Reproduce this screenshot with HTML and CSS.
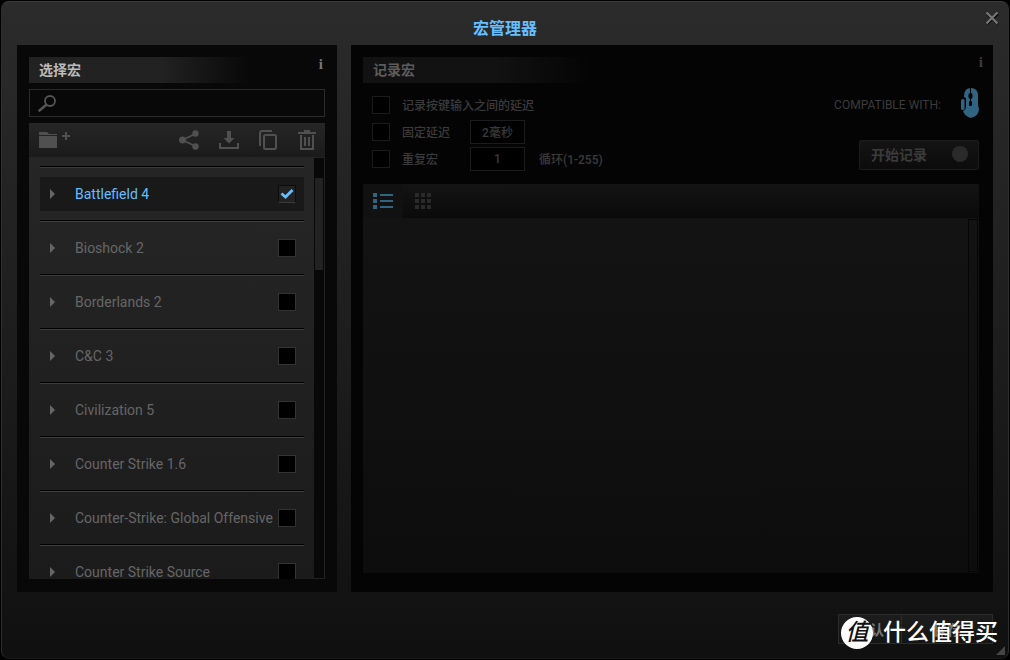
FILE: index.html
```html
<!DOCTYPE html>
<html lang="zh-CN">
<head>
<meta charset="utf-8">
<title>宏管理器</title>
<link rel="stylesheet" href="styles.css">
</head>
<body>
<main class="dialog">
  <header class="dialog-head">
    <h1>宏管理器</h1>
    <button class="close" aria-label="关闭"><svg width="14" height="14" viewBox="0 0 14 14"><path d="M2 3l11 10M13 3L2 13" stroke="#000" stroke-width="2"/><path d="M1.500 1.500l11 11M12.500 1.500l-11 11" stroke="#777" stroke-width="2.200"/></svg></button>
  </header>
  <div class="panels">
    <section class="panel select-panel">
      <div class="panel-head"><h2>选择宏</h2><button class="info" aria-label="信息">i</button></div>
      <label class="search">
        <svg width="20" height="18" viewBox="0 0 20 18" fill="none" stroke="#555"><circle cx="13" cy="7" r="5" stroke-width="1.800"/><path d="M9 11L2.500 16.500" stroke-width="2.600" stroke-linecap="round"/></svg>
        <input type="text" aria-label="搜索">
      </label>
      <div class="toolbar">
        <button class="new-folder" aria-label="新建文件夹"><svg width="32" height="20" viewBox="0 0 32 20" fill="#505050"><path d="M0 2h8l2 2h8v1H0zM0 6h18v12H0z"/><path d="M26 2h2v3h3v2h-3v3h-2V7h-3V5h3z"/></svg></button>
        <button aria-label="分享"><svg width="20" height="20" viewBox="0 0 20 20" fill="#505050"><path d="M17 3.500L3.500 10 17 16.500" fill="none" stroke="#505050" stroke-width="1.800"/><circle cx="16.500" cy="3.500" r="3.200"/><circle cx="3.500" cy="10" r="3.500"/><circle cx="16.500" cy="16.500" r="3.200"/></svg></button>
        <button aria-label="导入"><svg width="20" height="20" viewBox="0 0 20 20" fill="#505050"><path d="M8 1h4v7h3.500L10 13.500 4.500 8H8zM0 13h2v4h16v-4h2v6H0z"/></svg></button>
        <button aria-label="复制"><svg width="20" height="20" viewBox="0 0 20 20" fill="none" stroke="#505050" stroke-width="2"><path d="M1 16V3q0-2 2-2H13"/><rect x="5" y="5" width="12" height="14" rx="1.500"/></svg></button>
        <button aria-label="删除"><svg width="20" height="20" viewBox="0 0 20 20"><path d="M1 2h6V0h6v2h6v2H1z" fill="#505050"/><path d="M4 5v14h12V5M8 7v9M12 7v9" fill="none" stroke="#505050" stroke-width="2"/></svg></button>
      </div>
      <div class="list-wrap">
        <ul class="list">
          <li><div class="row selected"><button class="arrow" aria-label="展开"></button><label for="g1">Battlefield 4</label><input id="g1" class="check" type="checkbox" checked></div></li>
          <li><div class="row"><button class="arrow" aria-label="展开"></button><label for="g2">Bioshock 2</label><input id="g2" class="check" type="checkbox"></div></li>
          <li><div class="row"><button class="arrow" aria-label="展开"></button><label for="g3">Borderlands 2</label><input id="g3" class="check" type="checkbox"></div></li>
          <li><div class="row"><button class="arrow" aria-label="展开"></button><label for="g4">C&amp;C 3</label><input id="g4" class="check" type="checkbox"></div></li>
          <li><div class="row"><button class="arrow" aria-label="展开"></button><label for="g5">Civilization 5</label><input id="g5" class="check" type="checkbox"></div></li>
          <li><div class="row"><button class="arrow" aria-label="展开"></button><label for="g6">Counter Strike 1.6</label><input id="g6" class="check" type="checkbox"></div></li>
          <li><div class="row"><button class="arrow" aria-label="展开"></button><label for="g7">Counter-Strike: Global Offensive</label><input id="g7" class="check" type="checkbox"></div></li>
          <li><div class="row"><button class="arrow" aria-label="展开"></button><label for="g8">Counter Strike Source</label><input id="g8" class="check" type="checkbox"></div></li>
        </ul>
        <div class="scrollbar"><div class="thumb"></div></div>
      </div>
    </section>
    <section class="panel record-panel">
      <div class="panel-head"><h2>记录宏</h2><button class="info" aria-label="信息">i</button></div>
      <div class="record-settings">
        <div class="options">
          <div class="option"><input id="o1" class="check" type="checkbox"><label for="o1">记录按键输入之间的延迟</label></div>
          <div class="option"><input id="o2" class="check" type="checkbox"><label for="o2" class="short">固定延迟</label><input class="value" type="text" value="2毫秒" aria-label="延迟"></div>
          <div class="option"><input id="o3" class="check" type="checkbox"><label for="o3" class="short">重复宏</label><input id="loops" class="value" type="text" value="1"><label for="loops" class="unit">循环(1-255)</label></div>
        </div>
        <div class="record-side">
          <div class="compatible"><span>COMPATIBLE WITH:</span>
            <svg width="18" height="30" viewBox="0 0 18 30"><path d="M6 1q4-2 8 0 3 2 3 5v9q0 3 1 6 0 7-8.500 9-6-2-7.500-7 3-1 3-5V10L3 9q0-6 3-8z" fill="#316382"/><rect x="0" y="11" width="3.500" height="11" rx="1.500" fill="#316382"/><path d="M9.500 0v5M9.500 10v4" stroke="#050505"/><rect x="7.500" y="5" width="4" height="6" rx="2" fill="#050505"/><rect x="8" y="13" width="3" height="5" rx="1" fill="#050505"/></svg>
          </div>
          <button class="start">开始记录<span class="dot"></span></button>
        </div>
      </div>
      <div class="editor">
        <div class="tabs">
          <button class="tab active" aria-label="列表"><svg width="20" height="16" viewBox="0 0 20 16" fill="#316382"><path d="M0 0h4v4H0zM0 6h4v4H0zM0 12h4v4H0zM7 1h13v2H7zM7 7h13v2H7zM7 13h13v2H7z"/></svg></button>
          <button class="tab" aria-label="网格"><svg width="16" height="16" viewBox="0 0 16 16" fill="#2a2a2a"><path d="M0 0h4v4H0zM6 0h4v4H6zM12 0h4v4h-4zM0 6h4v4H0zM6 6h4v4H6zM12 6h4v4h-4zM0 12h4v4H0zM6 12h4v4H6zM12 12h4v4h-4z"/></svg></button>
        </div>
        <div class="canvas"><div class="rail"></div></div>
      </div>
    </section>
  </div>
  <footer><button class="foot ok">默认</button><button class="foot save">保存</button></footer>
  <div class="watermark"><span class="badge">值</span><span>什么值得买</span></div>
  <svg class="grip" width="9" height="9" viewBox="0 0 9 9"><path d="M9 0v9H0z" fill="#444"/></svg>
</main>
</body>
</html>
```
FILE: styles.css
```css
* { box-sizing: border-box; }
body {
  margin: 0;
  padding: 1px;
  height: 100vh;
  background: #000;
  font-family: Roboto, "Noto Sans CJK SC", sans-serif;
  font-size: 14px;
  color: #666;
}
button, input { font: inherit; color: inherit; padding: 0; margin: 0; border: 0; background: none; }
button svg { display: block; }
h1, h2, ul { margin: 0; padding: 0; list-style: none; }

.dialog {
  position: relative;
  height: 100%;
  display: flex;
  flex-direction: column;
  padding: 0 15px;
  border: 1px solid #2e2e2e;
  border-top-color: #3a3a3a;
  border-bottom-color: #1a1a1a;
  border-radius: 8px;
  background: linear-gradient(#2b2b2b, #101010);
}
.dialog-head { height: 43px; flex: none; display: flex; justify-content: center; padding-top: 15px; }
h1 { font-size: 16px; line-height: 24px; color: #64beff; font-weight: 700; }
.close { position: absolute; top: 9px; right: 9px; }

.panels { flex: 1; min-height: 0; display: flex; gap: 14px; }
.panel { display: flex; flex-direction: column; background: #080808; }
.select-panel { width: 320px; flex: none; padding: 12px 12px 13px; }
.record-panel { flex: 1; padding: 12px 14px 19px 12px; background: #040404; }
.panel-head { display: flex; height: 26px; flex: none; justify-content: space-between; align-items: flex-start; }
h2 {
  width: 240px;
  padding-left: 10px;
  font-size: 14px;
  line-height: 26px;
  color: #bbb;
  background: linear-gradient(90deg, #222 55%, transparent 92%);
}
.record-panel h2 { color: #5c5c5c; background: linear-gradient(90deg, #121212 55%, transparent 95%); }
.info { margin-right: 2px; font: bold 15px/14px "Liberation Serif", serif; color: #777; }
.record-panel .info { color: #3c3c3c; line-height: 10px; margin-right: -4px; }

.search {
  display: flex;
  align-items: center;
  height: 28px;
  margin: 6px 0;
  padding: 0 7px;
  border: 1px solid #2b2b2b;
}
.search input { flex: 1; min-width: 0; outline: 0; }
.toolbar {
  display: flex;
  align-items: center;
  gap: 19px;
  height: 34px;
  padding: 0 9px 0 10px;
  background: linear-gradient(#262626, #1b1b1b);
}
.toolbar { gap: 20px; padding-right: 8px; }
.toolbar button:last-child { margin-left: -2px; }
.new-folder { margin-right: auto; }

.list-wrap { flex: 1; min-height: 0; display: flex; background: linear-gradient(#262626, #1b1b1b); }
.list { flex: 1; overflow: hidden; padding: 9px 10px 0 11px; }
.list li { border-top: 1px solid #000; padding-bottom: 9px; }
.list li::before { content: ""; display: block; height: 1px; margin-bottom: 9px; background: #3c3c3c; }
.row { display: flex; align-items: center; height: 34px; padding: 0 8px 0 10px; }
.row label { flex: 1; white-space: nowrap; }
.selected { background: #191919; color: #64beff; }
.arrow {
  width: 5px;
  height: 10px;
  margin-right: 20px;
  background: #666;
  clip-path: polygon(0 0, 100% 50%, 0 100%);
}
.check {
  appearance: none;
  flex: none;
  width: 18px;
  height: 18px;
  background: #000;
  border: 1px solid #333;
}
.check:checked {
  border-color: #0c0c0c #0c0c0c #3a3a3a;
  background: #222 url("data:image/svg+xml,%3Csvg xmlns='http://www.w3.org/2000/svg' viewBox='0 0 16 16'%3E%3Cpath d='M2.500 7.500l4 3.500 7-7' fill='none' stroke='%2364beff' stroke-width='2.800'/%3E%3C/svg%3E");
}
.scrollbar { width: 11px; padding: 20px 1px 1px 1px; background: #080808; border: solid #222; border-width: 1px 1px 1px 0; }
.thumb { height: 92px; background: #222; }

.record-settings { display: flex; justify-content: space-between; height: 101px; flex: none; font-size: 12px; color: #3b3b3b; }
.options { padding: 8px 0 0 9px; font-weight: 500; }
.option { display: flex; align-items: center; height: 27px; }
.record-panel .check { border-color: #1b1b1b; margin-right: 12px; }
.short { width: 68px; }
.value { width: 55px; height: 24px; border: 1px solid #1b1b1b; background: #000; text-align: center; }
.unit { margin-left: 14px; }
.record-side { display: flex; flex-direction: column; align-items: flex-end; padding-top: 5px; }
.compatible { display: flex; align-items: center; gap: 20px; height: 30px; }
.compatible span { padding-top: 4px; }
.start {
  display: flex;
  align-items: center;
  justify-content: space-between;
  width: 120px;
  height: 30px;
  margin-top: 22px;
  padding: 0 10px 2px 11px;
  border: 1px solid #1c1c1c;
  border-radius: 2px;
  background: linear-gradient(#141414, #0c0c0c);
  font-size: 14px;
  font-weight: 700;
}
.dot { width: 16px; height: 16px; border-radius: 50%; background: #2a2a2a; }
.editor { flex: 1; display: flex; flex-direction: column; background: #111; }
.tabs { display: flex; height: 34px; background: linear-gradient(#141414, #0a0a0a); }
.tab { display: grid; place-items: center; width: 40px; }
.tab.active { background: #111; }
.canvas { flex: 1; display: flex; justify-content: flex-end; padding: 1px; background: linear-gradient(#131313, #0d0d0d); }
.rail { width: 10px; border: 1px solid #050505; }

footer { flex: none; display: flex; justify-content: flex-end; height: 66px; padding-top: 22px; }
.foot { height: 30px; border: 1px solid #2b2b2b; background: linear-gradient(#1d1d1d, #151515); color: #777; font-weight: 700; }
.ok { width: 64px; }
.save { width: 92px; margin-left: -1px; }
.watermark {
  position: absolute;
  right: 10px;
  bottom: 9px;
  display: flex;
  align-items: center;
  gap: 10px;
  color: #fff;
  font-size: 23px;
  font-weight: 500;
  line-height: 32px;
}
.badge { width: 32px; height: 32px; border-radius: 50%; background: #fff; color: #111; text-align: center; font-style: italic; }
.grip { position: absolute; right: 3px; bottom: 3px; }
```
